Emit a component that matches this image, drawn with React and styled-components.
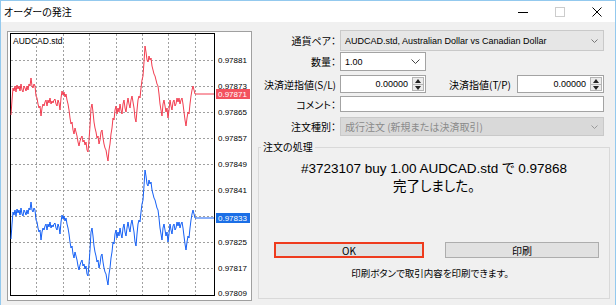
import React from "react";
import styled, { createGlobalStyle } from "styled-components";

const JP = `"Noto Sans CJK JP", "Liberation Sans", sans-serif`;
const LATIN = `"Liberation Sans", "Noto Sans CJK JP", sans-serif`;

const GlobalStyle = createGlobalStyle`
  html, body {
    margin: 0;
    padding: 0;
    background: #f0f0f0;
  }
  body {
    font-family: ${JP};
  }
`;

const Window = styled.div`
  width: 616px;
  height: 305px;
  box-sizing: border-box;
  border: 1px solid #93c9ee;
  border-bottom: none;
  background: #f0f0f0;
  display: flex;
  flex-direction: column;
  overflow: hidden;
`;

const TitleBar = styled.div`
  height: 21px;
  flex-shrink: 0;
  background: #ffffff;
  display: flex;
  align-items: center;
`;

const Title = styled.span`
  padding-left: 3px;
  font-family: ${JP};
  font-size: 10px;
  font-feature-settings: "palt";
  color: #000;
`;

const Controls = styled.div`
  margin-left: auto;
  display: flex;
  height: 100%;
`;

const CtrlButton = styled.div`
  width: 37px;
  height: 100%;
  display: flex;
  align-items: center;
  justify-content: center;
`;

const Body = styled.div`
  flex: 1;
  display: flex;
  padding: 9px 0 0 6px;
`;

const ChartPanel = styled.div`
  width: 245px;
  height: 270px;
  flex-shrink: 0;
  box-sizing: border-box;
  border: 1px solid #a0a0a0;
  background: #ffffff;
  svg {
    display: block;
  }
`;

const Form = styled.div`
  margin-left: 6px;
  margin-top: -1px;
  width: 352px;
  display: flex;
  flex-direction: column;
`;

const Row = styled.div`
  display: flex;
  align-items: center;
  height: ${(p) => p.h}px;
  margin-top: ${(p) => p.mt || 0}px;
`;

const Label = styled.span`
  width: ${(p) => p.w || 82}px;
  flex-shrink: 0;
  box-sizing: border-box;
  padding-right: ${(p) => p.pr ?? 4}px;
  text-align: right;
  font-family: ${JP};
  font-size: 10px;
  font-feature-settings: "palt";
  color: #000;
  white-space: nowrap;
`;

const Combo = styled.div`
  width: ${(p) => p.w}px;
  height: 100%;
  box-sizing: border-box;
  display: flex;
  align-items: center;
  padding: 0 5px 0 4px;
  border: 1px solid ${(p) => (p.variant === "white" ? "#a3a3a3" : "#c9c9c9")};
  background: ${(p) =>
    p.variant === "white" ? "#ffffff" : p.variant === "dim" ? "#d9d9d9" : "#e6e6e6"};
  font-family: ${(p) => (p.variant === "dim" ? JP : LATIN)};
  font-size: ${(p) => (p.variant === "dim" ? 10 : 9)}px;
  font-feature-settings: "palt";
  color: ${(p) => (p.variant === "dim" ? "#8a8a8a" : "#000")};
`;

const ComboText = styled.span`
  flex: 1;
  white-space: nowrap;
`;

const SpinBox = styled.div`
  width: ${(p) => p.w}px;
  height: 100%;
  box-sizing: border-box;
  display: flex;
  align-items: center;
  border: 1px solid #a3a3a3;
  background: #ffffff;
  padding: 0 1px 0 4px;
`;

const SpinValue = styled.span`
  flex: 1;
  text-align: right;
  padding-right: 4px;
  font-family: ${LATIN};
  font-size: 9px;
  color: #000;
`;

const SpinButtons = styled.div`
  width: 12px;
  height: 14px;
  box-sizing: border-box;
  border: 1px solid #b5b5b5;
  background: #ececec;
  display: flex;
  flex-direction: column;
  align-items: center;
  justify-content: space-around;
`;

const TextBox = styled.div`
  width: ${(p) => p.w}px;
  height: 100%;
  box-sizing: border-box;
  border: 1px solid #a3a3a3;
  background: #ffffff;
`;

const GroupBox = styled.fieldset`
  margin: 5px 0 0 0;
  padding: 0;
  width: 352px;
  height: 158px;
  box-sizing: border-box;
  border: 1px solid #d9d9d9;
  min-width: 0;
  display: flex;
  flex-direction: column;
  align-items: center;
`;

const Legend = styled.legend`
  margin-left: 2px;
  padding: 0 2px;
  font-family: ${JP};
  font-size: 10px;
  line-height: 12px;
  font-feature-settings: "palt";
  color: #000;
`;

const Message = styled.div`
  margin-top: 7px;
  text-align: center;
  color: #000;
`;

const MessageLine = styled.div`
  font-family: ${LATIN};
  font-size: 13.5px;
  line-height: 18px;
  white-space: nowrap;
  font-feature-settings: "palt";
`;

const ButtonRow = styled.div`
  align-self: stretch;
  display: flex;
  margin-top: 46px;
  padding-left: 15px;
  gap: 21px;
`;

const Button = styled.div`
  width: ${(p) => p.w}px;
  height: 16px;
  box-sizing: border-box;
  border: ${(p) => (p.focused ? "2px solid #ee3b1d" : "1px solid #adadad")};
  background: #e1e1e1;
  display: flex;
  align-items: center;
  justify-content: center;
  font-family: ${JP};
  font-size: 10px;
  font-feature-settings: "palt";
  color: #000;
`;

const Note = styled.div`
  margin-top: 8px;
  margin-right: 8px;
  font-family: ${JP};
  font-size: 9.5px;
  line-height: 14px;
  font-feature-settings: "palt";
  color: #000;
`;

const Chevron = ({ size = 5, color = "#6b6b6b" }) => (
  <svg width={size * 2 + 1} height={size + 1} viewBox={`0 0 ${size * 2 + 1} ${size + 1}`}>
    <polyline points={`0.5,0.5 ${size + 0.5},${size + 0.5} ${size * 2 + 0.5},0.5`} fill="none" stroke={color} strokeWidth="1" />
  </svg>
);

const Spinner = () => (
  <SpinButtons>
    <svg width="6" height="4" viewBox="0 0 6 4">
      <polygon points="3,0 6,4 0,4" fill="#222" />
    </svg>
    <svg width="10" height="1" viewBox="0 0 10 1">
      <rect width="10" height="1" fill="#b5b5b5" />
    </svg>
    <svg width="6" height="4" viewBox="0 0 6 4">
      <polygon points="0,0 6,0 3,4" fill="#222" />
    </svg>
  </SpinButtons>
);

// price path in page coordinates (red series); blue = same shape shifted down
const KEY = [
  [11, 115], [12, 100], [13, 88], [14, 91], [15, 86], [16, 92], [17, 85], [18, 89], [19, 86], [20, 91],
  [21, 84], [22, 90], [23, 92], [24, 86], [25, 88], [26, 91], [27, 86], [28, 90], [29, 84], [30, 86],
  [31, 78], [32, 86], [33, 88], [34, 84], [35, 86], [36, 96], [37, 98], [38, 104], [39, 108], [40, 106],
  [41, 116], [42, 108], [43, 104], [44, 106], [45, 102], [46, 100], [47, 106], [48, 100], [49, 103],
  [50, 98], [51, 104], [52, 101], [53, 103], [54, 100], [55, 99], [56, 104], [57, 106], [58, 100],
  [59, 103], [60, 110], [61, 98], [62, 91], [63, 95], [64, 92], [65, 97], [66, 94], [67, 100],
  [68, 104], [69, 110], [70, 118], [71, 124], [72, 122], [73, 130], [74, 134], [75, 128], [76, 132],
  [77, 136], [78, 142], [79, 146], [80, 141], [81, 138], [82, 136], [83, 142], [84, 140], [85, 145],
  [86, 142], [87, 150], [88, 152], [89, 140], [90, 126], [91, 108], [92, 104], [93, 112], [94, 122],
  [95, 128], [96, 132], [97, 138], [98, 136], [99, 144], [100, 140], [101, 132], [102, 130], [103, 138],
  [104, 144], [105, 148], [106, 150], [107, 156], [108, 161], [109, 150], [110, 144], [111, 134],
  [112, 128], [113, 118], [114, 120], [115, 110], [116, 106], [117, 114], [118, 108], [119, 112],
  [120, 104], [121, 110], [122, 114], [123, 104], [124, 100], [125, 108], [126, 112], [127, 104],
  [128, 98], [129, 104], [130, 108], [131, 100], [132, 96], [133, 102], [134, 108], [135, 118],
  [136, 122], [137, 110], [138, 100], [139, 96], [140, 98], [141, 88], [142, 80], [143, 76], [144, 62],
  [145, 46], [146, 52], [147, 60], [148, 62], [149, 56], [150, 60], [151, 58], [152, 66], [153, 70],
  [154, 74], [155, 76], [156, 80], [157, 84], [158, 86], [159, 94], [160, 104], [161, 110], [162, 116],
  [163, 104], [164, 100], [165, 106], [166, 112], [167, 108], [168, 118], [169, 110], [170, 100],
  [171, 106], [172, 110], [173, 102], [174, 100], [175, 106], [176, 104], [177, 98], [178, 102],
  [179, 98], [180, 104], [181, 100], [182, 98], [183, 104], [184, 112], [185, 120], [186, 126],
  [187, 118], [188, 112], [189, 114], [190, 104], [191, 96], [192, 90], [193, 86], [194, 90], [195, 94],
];

const GRID_X = [36, 63, 89, 116, 142, 168, 195];
const GRID_Y = [60, 86, 112, 138, 164, 190, 216, 242, 268];
// the 0.97833 level is covered by the blue bid box, so it is not listed here
const PRICES = [
  ["0.97881", 60], ["0.97873", 86], ["0.97865", 112], ["0.97857", 138], ["0.97849", 164],
  ["0.97841", 190], ["0.97825", 242], ["0.97817", 268], ["0.97809", 293],
];

function Chart() {
  const red = KEY.map(([x, y]) => `${x},${y}`).join(" ") + " 214,94";
  const blue = KEY.map(([x, y]) => `${x},${y + 124}`).join(" ") + " 214,218";
  const grid =
    GRID_X.map((x) => `M${x + 0.5} 34V295`).join("") +
    GRID_Y.map((y) => `M11 ${y + 0.5}H214`).join("");
  return (
    <svg width="243" height="268" viewBox="8 32 243 268">
      <rect x="8" y="32" width="243" height="268" fill="#fff" />
      <path d={grid} fill="none" stroke="#a0a0a0" strokeWidth="1" strokeDasharray="2 2" shapeRendering="crispEdges" />
      <rect x="10.5" y="33.5" width="204" height="262" fill="none" stroke="#000" />
      <text x="13" y="44" fontFamily="Liberation Sans, sans-serif" fontSize="8.5" fill="#000">
        AUDCAD.std
      </text>
      <polyline points={red} fill="none" stroke="#f23d50" strokeWidth="1" strokeLinejoin="round" />
      <polyline points={blue} fill="none" stroke="#1560f5" strokeWidth="1" strokeLinejoin="round" />
      {PRICES.map(([p, y]) => (
        <text key={p} x="218" y={y + 3} fontFamily="Liberation Sans, sans-serif" fontSize="8" fill="#000">
          {p}
        </text>
      ))}
      <rect x="216" y="89" width="34" height="10" fill="#f3525f" />
      <text x="218" y="97" fontFamily="Liberation Sans, sans-serif" fontSize="8" fill="#fff">
        0.97871
      </text>
      <rect x="216" y="213" width="34" height="10" fill="#1b6fe6" />
      <text x="218" y="221" fontFamily="Liberation Sans, sans-serif" fontSize="8" fill="#fff">
        0.97833
      </text>
    </svg>
  );
}

export default function App() {
  return (
    <>
      <GlobalStyle />
      <Window>
        <TitleBar>
          <Title>オーダーの発注</Title>
          <Controls>
            <CtrlButton>
              <svg width="10" height="10" viewBox="0 0 10 10">
                <line x1="0" y1="5.5" x2="10" y2="5.5" stroke="#000" />
              </svg>
            </CtrlButton>
            <CtrlButton>
              <svg width="10" height="10" viewBox="0 0 10 10">
                <rect x="0.5" y="0.5" width="9" height="9" fill="none" stroke="#cccccc" />
              </svg>
            </CtrlButton>
            <CtrlButton>
              <svg width="10" height="10" viewBox="0 0 10 10">
                <path d="M0.5 0.5 L9.5 9.5 M9.5 0.5 L0.5 9.5" stroke="#000" strokeWidth="1" />
              </svg>
            </CtrlButton>
          </Controls>
        </TitleBar>
        <Body>
          <ChartPanel>
            <Chart />
          </ChartPanel>
          <Form>
            <Row h={21}>
              <Label>通貨ペア：</Label>
              <Combo w={264}>
                <ComboText>AUDCAD.std, Australian Dollar vs Canadian Dollar</ComboText>
                <Chevron size={3} color="#777" />
              </Combo>
            </Row>
            <Row h={19} mt={1}>
              <Label>数量：</Label>
              <Combo w={86} variant="white">
                <ComboText>1.00</ComboText>
                <Chevron size={4} color="#444" />
              </Combo>
            </Row>
            <Row h={18} mt={4}>
              <Label>決済逆指値(S/L)</Label>
              <SpinBox w={86}>
                <SpinValue>0.00000</SpinValue>
                <Spinner />
              </SpinBox>
              <Label w={91} pr={6}>決済指値(T/P)</Label>
              <SpinBox w={87}>
                <SpinValue>0.00000</SpinValue>
                <Spinner />
              </SpinBox>
            </Row>
            <Row h={16} mt={3}>
              <Label>コメント：</Label>
              <TextBox w={264} />
            </Row>
            <Row h={19} mt={5}>
              <Label>注文種別：</Label>
              <Combo w={264} variant="dim">
                <ComboText>成行注文 (新規または決済取引)</ComboText>
                <Chevron size={3} color="#999" />
              </Combo>
            </Row>
            <GroupBox>
              <Legend>注文の処理</Legend>
              <Message>
                <MessageLine>#3723107 buy 1.00 AUDCAD.std で 0.97868</MessageLine>
                <MessageLine>完了しました。</MessageLine>
              </Message>
              <ButtonRow>
                <Button w={150} focused>OK</Button>
                <Button w={154}>印刷</Button>
              </ButtonRow>
              <Note>印刷ボタンで取引内容を印刷できます。</Note>
            </GroupBox>
          </Form>
        </Body>
      </Window>
    </>
  );
}
